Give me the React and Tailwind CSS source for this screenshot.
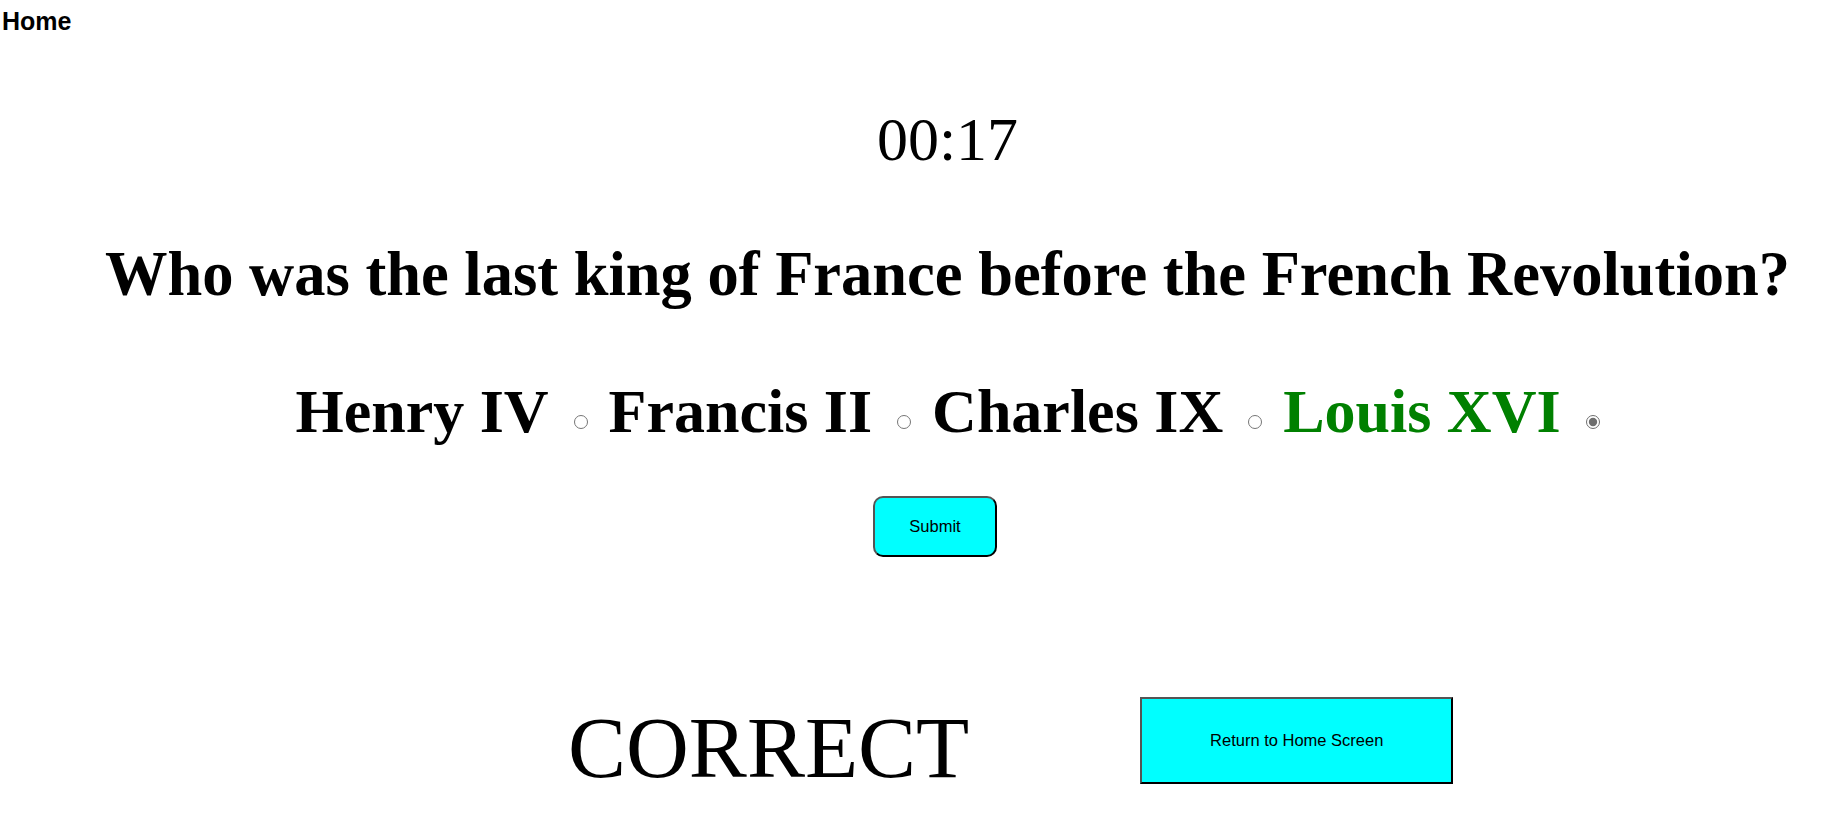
import React from 'react';

const options = ['Henry IV', 'Francis II', 'Charles IX', 'Louis XVI'];

const App = () => {
  const picked = 'Louis XVI';

  return (
    <div className="min-h-[838px] bg-white text-black">
      {/* Nav */}
      <div className="pt-[7px] pl-[2px] text-[25px] leading-[28px] font-bold font-['Liberation_Sans',Arial,sans-serif]">
        Home
      </div>

      {/* Quiz */}
      <div className="pl-[58px] font-['Liberation_Serif','Times_New_Roman',serif] text-center">
        <div className="mt-[69px] text-[62px] leading-[70px]">00:17</div>

        <h1 className="mt-[65px] text-[62.5px] leading-[70px] font-bold whitespace-nowrap">
          Who was the last king of France before the French Revolution?
        </h1>

        <div className="mt-[67px] text-[62px] leading-[70px] font-bold whitespace-nowrap">
          {options.map((opt, i) => (
            <React.Fragment key={opt}>
              <span className={opt === picked ? 'text-[#008000]' : ''}>{opt}</span>
              <input
                type="radio"
                name="answer"
                checked={opt === picked}
                readOnly
                className={`w-[14px] h-[14px] align-[3px] ml-[25px] accent-[#6e6e6e] ${i < options.length - 1 ? 'mr-[21px]' : ''}`}
              />
            </React.Fragment>
          ))}
        </div>

        <div className="mt-[50px] flex justify-center pr-[25px]">
          <button className="w-[124px] h-[61px] bg-[#00ffff] rounded-[10px] border-2 border-t-[#555] border-l-[#555] border-r-black border-b-black text-[16.5px] font-['Liberation_Sans',Arial,sans-serif]">
            Submit
          </button>
        </div>
      </div>

      {/* Result */}
      <div className="mt-[140px] flex items-start pl-[568px] gap-[171px]">
        <div className="mt-[1px] text-[87px] leading-[100px] font-['Liberation_Serif','Times_New_Roman',serif]">
          CORRECT
        </div>
        <button className="w-[313px] h-[87px] bg-[#00ffff] border-2 border-t-[#555] border-l-[#555] border-r-black border-b-black text-[16.5px] font-['Liberation_Sans',Arial,sans-serif]">
          Return to Home Screen
        </button>
      </div>
    </div>
  );
};

export default App;
